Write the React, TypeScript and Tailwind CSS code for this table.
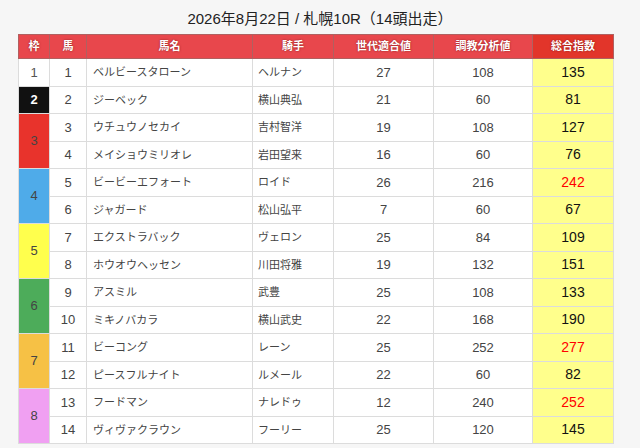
import React from 'react';

interface Horse {
  waku: number;
  num: number;
  name: string;
  jockey: string;
  sedai: number;
  chokyo: number;
  total: number;
}

const horses: Horse[] = [
  { waku: 1, num: 1, name: 'ベルビースタローン', jockey: 'ヘルナン', sedai: 27, chokyo: 108, total: 135 },
  { waku: 2, num: 2, name: 'ジーベック', jockey: '横山典弘', sedai: 21, chokyo: 60, total: 81 },
  { waku: 3, num: 3, name: 'ウチュウノセカイ', jockey: '吉村智洋', sedai: 19, chokyo: 108, total: 127 },
  { waku: 3, num: 4, name: 'メイショウミリオレ', jockey: '岩田望来', sedai: 16, chokyo: 60, total: 76 },
  { waku: 4, num: 5, name: 'ビービーエフォート', jockey: 'ロイド', sedai: 26, chokyo: 216, total: 242 },
  { waku: 4, num: 6, name: 'ジャガード', jockey: '松山弘平', sedai: 7, chokyo: 60, total: 67 },
  { waku: 5, num: 7, name: 'エクストラバック', jockey: 'ヴェロン', sedai: 25, chokyo: 84, total: 109 },
  { waku: 5, num: 8, name: 'ホウオウヘッセン', jockey: '川田将雅', sedai: 19, chokyo: 132, total: 151 },
  { waku: 6, num: 9, name: 'アスミル', jockey: '武豊', sedai: 25, chokyo: 108, total: 133 },
  { waku: 6, num: 10, name: 'ミキノバカラ', jockey: '横山武史', sedai: 22, chokyo: 168, total: 190 },
  { waku: 7, num: 11, name: 'ビーコング', jockey: 'レーン', sedai: 25, chokyo: 252, total: 277 },
  { waku: 7, num: 12, name: 'ピースフルナイト', jockey: 'ルメール', sedai: 22, chokyo: 60, total: 82 },
  { waku: 8, num: 13, name: 'フードマン', jockey: 'ナレドゥ', sedai: 12, chokyo: 240, total: 252 },
  { waku: 8, num: 14, name: 'ヴィヴァクラウン', jockey: 'フーリー', sedai: 25, chokyo: 120, total: 145 },
];

const wakuStyle: Record<number, string> = {
  1: 'bg-white text-[#555]',
  2: 'bg-[#111] text-white font-bold',
  3: 'bg-[#e8332c] text-[#333]',
  4: 'bg-[#4fabe9] text-[#333]',
  5: 'bg-[#ffff4d] text-[#333]',
  6: 'bg-[#4dac5a] text-[#333]',
  7: 'bg-[#f6c145] text-[#333]',
  8: 'bg-[#f0a0f2] text-[#333]',
};

const th = 'border border-[#b06060] font-bold text-white text-[11px] [text-shadow:0_0_2px_rgba(90,0,0,0.7)]';
const td = 'border border-[#dcdcdc] text-[13px] text-[#444]';

export default function App() {
  return (
    <div
      className="w-[640px] h-[448px] bg-[#f6f6f6] overflow-hidden pt-[9px]"
      style={{ fontFamily: '"Liberation Sans", "Noto Sans CJK JP", sans-serif' }}
    >
      <h1 className="text-center text-[15px] leading-[20px] text-[#222] mb-[5px]">
        2026年8月22日 / 札幌10R（14頭出走）
      </h1>
      <table className="ml-[18px] w-[595px] table-fixed border-collapse bg-white">
        <colgroup>
          <col className="w-[31px]" />
          <col className="w-[37px]" />
          <col className="w-[166px]" />
          <col className="w-[81px]" />
          <col className="w-[100px]" />
          <col className="w-[99px]" />
          <col className="w-[81px]" />
        </colgroup>
        <thead>
          <tr className="h-[24px] bg-[#e8474c]">
            <th className={th}>枠</th>
            <th className={th}>馬</th>
            <th className={th}>馬名</th>
            <th className={th}>騎手</th>
            <th className={th}>世代適合値</th>
            <th className={th}>調教分析値</th>
            <th className={`${th} bg-[#e2352a]`}>総合指数</th>
          </tr>
        </thead>
        <tbody>
          {horses.map((h, i) => {
            const first = i === 0 || horses[i - 1].waku !== h.waku;
            const span = horses.filter((x) => x.waku === h.waku).length;
            return (
              <tr key={h.num} className="h-[27.5px]">
                {first && (
                  <td rowSpan={span} className={`${td} text-center ${wakuStyle[h.waku]}`}>
                    {h.waku}
                  </td>
                )}
                <td className={`${td} text-center`}>{h.num}</td>
                <td className={`${td} !text-[11px] pl-[6px]`}>{h.name}</td>
                <td className={`${td} !text-[11px] pl-[5px]`}>{h.jockey}</td>
                <td className={`${td} text-center`}>{h.sedai}</td>
                <td className={`${td} text-center`}>{h.chokyo}</td>
                <td
                  className={`border border-[#dcdcdc] bg-[#ffff8c] text-center text-[14px] ${
                    h.total >= 200 ? 'text-[#f00]' : 'text-[#111]'
                  }`}
                >
                  {h.total}
                </td>
              </tr>
            );
          })}
        </tbody>
      </table>
    </div>
  );
}
